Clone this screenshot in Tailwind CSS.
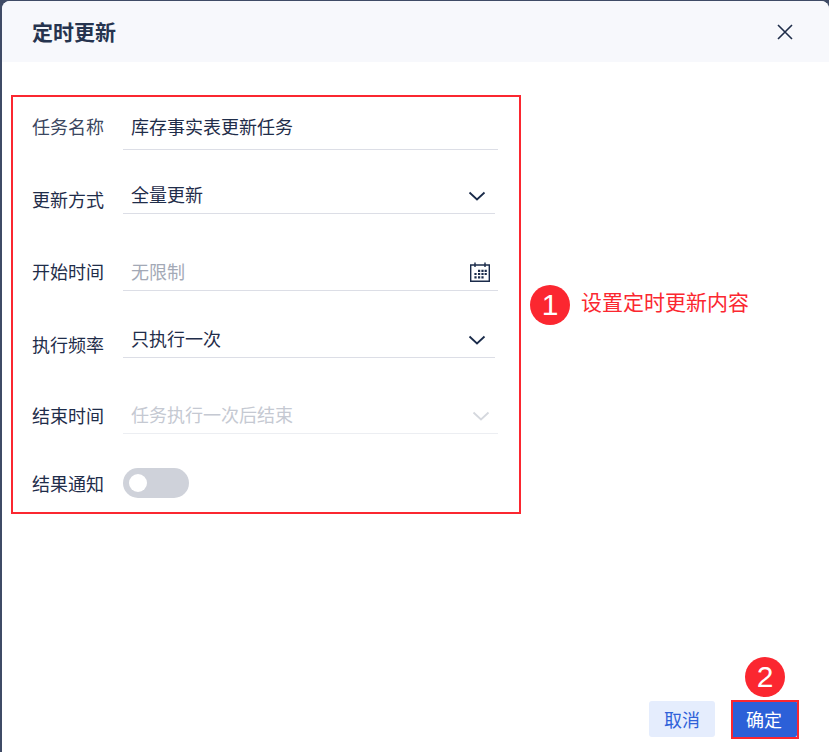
<!DOCTYPE html>
<html lang="zh">
<head>
<meta charset="utf-8">
<script src="https://cdn.jsdelivr.net/npm/@tailwindcss/browser@4"></script>
</head>
<body class="bg-[#3f4b66] font-['Noto_Sans_CJK_SC','Noto_Sans',sans-serif]">
<div class="relative w-[829px] h-[752px] overflow-hidden pl-[2px] pt-[1px]">
  <div class="relative flex flex-col w-[827px] h-[751px] bg-white rounded-t-[8px] overflow-hidden">
    <header class="flex items-center justify-between h-[61px] shrink-0 bg-[#f7f8fc] pl-[30px] pr-[35px]">
      <h1 class="text-[21px] leading-[28px] pb-[2px] font-bold text-[#26344f]">定时更新</h1>
      <svg class="w-[18px] h-[18px] text-[#1f2d4a]" viewBox="0 0 18 18" fill="none" stroke="currentColor" stroke-width="1.6"><path d="M2 2 16 16M16 2 2 16"/></svg>
    </header>

    <form class="flex flex-col pl-[30px] text-[18px] leading-[24px] text-[#1f2d4a] w-[496px]">
      <div class="flex items-end gap-[19px] h-[88px]">
        <label class="w-[72px] shrink-0 pb-[12px] text-[#3a4660]">任务名称</label>
        <div class="w-[375px] h-[45px] flex items-center pl-[8px] pb-[3px] border-b border-[#dcdee6] whitespace-nowrap">库存事实表更新任务</div>
      </div>
      <div class="flex items-end gap-[19px] h-[64px]">
        <label class="w-[72px] shrink-0 pb-[3px]">更新方式</label>
        <div class="w-[372px] h-[36px] flex items-center justify-between pl-[8px] pr-[9px] border-b border-[#dcdee6]">
          <span class="pb-[3px]">全量更新</span>
          <svg class="w-[18px] h-[10px] text-[#1a2b4a]" viewBox="0 0 18 10" fill="none" stroke="currentColor" stroke-width="1.8"><path d="M1.5 1.5 9 8.5l7.5-7"/></svg>
        </div>
      </div>
      <div class="flex items-end gap-[19px] h-[77px]">
        <label class="w-[72px] shrink-0 pb-[8px]">开始时间</label>
        <div class="w-[375px] h-[36px] flex items-center justify-between pl-[8px] pr-[7px] pb-[1px] border-b border-[#dcdee6]">
          <span class="text-[#a3a9b6] pb-[2px]">无限制</span>
          <svg class="w-[22px] h-[22px] text-[#1a2b4a]" viewBox="0 0 22 22" fill="none" stroke="currentColor"><path stroke-width="1.4" d="M1.7 4h18.6v16.3H1.7zM6 1.5v4.5M16 1.5v4.5"/><path stroke-width="2.2" d="M9 9.8h2.2M12.4 9.8h2.2M15.6 9.8h2.2M5.4 13h2.2M9 13h2.2M12.4 13h2.2M15.6 13h2.2M5.4 16.4h2.2M9 16.4h2.2M12.4 16.4h2.2"/></svg>
        </div>
      </div>
      <div class="flex items-end gap-[19px] h-[67px]">
        <label class="w-[72px] shrink-0 pb-[2px]">执行频率</label>
        <div class="w-[372px] h-[36px] flex items-center justify-between pl-[8px] pr-[9px] border-b border-[#dcdee6]">
          <span class="pb-[3px]">只执行一次</span>
          <svg class="w-[18px] h-[10px] text-[#1a2b4a]" viewBox="0 0 18 10" fill="none" stroke="currentColor" stroke-width="1.8"><path d="M1.5 1.5 9 8.5l7.5-7"/></svg>
        </div>
      </div>
      <div class="flex items-end gap-[19px] h-[76px]">
        <label class="w-[72px] shrink-0 pb-[7px]">结束时间</label>
        <div class="w-[375px] h-[36px] flex items-center justify-between pl-[8px] pr-[8px] border-b border-[#eceef2] text-[#c5c9d2]">
          <span class="pb-[4px]">任务执行一次后结束</span>
          <svg class="w-[18px] h-[10px] text-[#d5d8de]" viewBox="0 0 18 10" fill="none" stroke="currentColor" stroke-width="1.8"><path d="M1.5 1.5 9 8.5l7.5-7"/></svg>
        </div>
      </div>
      <div class="flex items-center gap-[19px] mt-[34px] h-[30px]">
        <label class="w-[72px] shrink-0">结果通知</label>
        <div class="w-[66px] h-[30px] rounded-full bg-[#cfd2da] flex items-center pl-[6px]">
          <span class="w-[18px] h-[18px] rounded-full bg-white"></span>
        </div>
      </div>
    </form>

    <footer class="mt-auto flex justify-end gap-[16px] pr-[32px] pb-[15px] text-[18px]">
      <button class="w-[66px] h-[36px] rounded-[3px] bg-[#e5edfd] text-[#2f62d9]">取消</button>
      <button class="w-[66px] h-[36px] rounded-[2px] bg-[#2c60d8] text-white">确定</button>
    </footer>

    <!-- annotations -->
    <div class="absolute left-[9px] top-[94px] w-[510px] h-[419px] border-2 border-[#fb2730]"></div>
    <div class="absolute left-[528px] top-[284px] flex items-center gap-[11px] text-[#fb2730]">
      <span class="w-[40px] h-[40px] rounded-full bg-[#fb2730] text-white text-[30px] leading-[40px] text-center font-['Liberation_Sans',sans-serif]">1</span>
      <span class="text-[21px] leading-[28px] pb-[8px] box-content whitespace-nowrap">设置定时更新内容</span>
    </div>
    <div class="absolute left-[729px] top-[699px] w-[68px] h-[39px] border-2 border-[#fb2730]"></div>
    <span class="absolute left-[743px] top-[656px] w-[40px] h-[40px] rounded-full bg-[#fb2730] text-white text-[30px] leading-[40px] text-center font-['Liberation_Sans',sans-serif]">2</span>
  </div>
</div>
</body>
</html>
